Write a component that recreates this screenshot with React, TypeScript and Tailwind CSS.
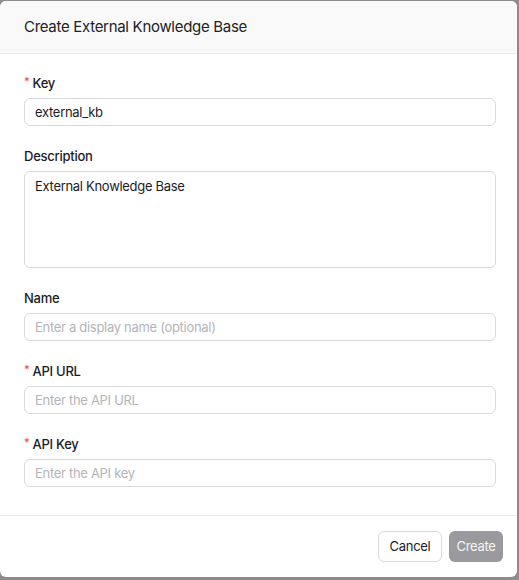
import { useState } from "react";

type FieldProps = {
  label: string;
  required?: boolean;
  className?: string;
  children: React.ReactNode;
};

function Field({ label, required, className, children }: FieldProps) {
  return (
    <div className={className}>
      <label className="flex h-[18px] items-center text-[13px] font-medium leading-[18px] tracking-[-0.25px] text-[#1c1c1e] mb-1.5">
        {required && <span className="mr-[3px] -mt-1 text-[11px] text-[#e5484d]">*</span>}
        {label}
      </label>
      {children}
    </div>
  );
}

const inputCls =
  "block w-full h-[28px] rounded-md border border-[#d9d9db] bg-white px-[10px] text-[13px] tracking-[-0.3px] text-[#1c1c1e] placeholder:text-[#b4b4b8] outline-none";

export default function App() {
  const [key, setKey] = useState("external_kb");
  const [description, setDescription] = useState("External Knowledge Base");
  const [name, setName] = useState("");
  const [apiUrl, setApiUrl] = useState("");
  const [apiKey, setApiKey] = useState("");

  return (
    <div
      className="h-[580px] w-[519px] bg-[#8c8c8c] pt-px"
      style={{ fontFamily: "Inter, 'Noto Sans', sans-serif" }}
    >
      <div className="flex h-[576px] w-[517px] flex-col overflow-hidden rounded-md bg-white">
        {/* Header */}
        <div className="flex h-[53px] shrink-0 items-center border-b border-[#ebebec] bg-[#faf9f9] px-6">
          <h2 className="text-[15px] font-normal tracking-[-0.3px] text-[#222224]">
            Create External Knowledge Base
          </h2>
        </div>

        {/* Body */}
        <div className="flex flex-1 flex-col gap-[21px] pl-6 pr-[21px] pt-5">
          <Field label="Key" required>
            <input className={inputCls} value={key} onChange={(e) => setKey(e.target.value)} />
          </Field>
          <Field label="Description">
            <textarea
              className="block h-[97px] w-full resize-none rounded-md border border-[#d9d9db] bg-white px-[10px] py-[5px] text-[13px] leading-[18px] tracking-[-0.3px] text-[#1c1c1e] outline-none"
              value={description}
              onChange={(e) => setDescription(e.target.value)}
            />
          </Field>
          <Field label="Name">
            <input
              className={inputCls}
              placeholder="Enter a display name (optional)"
              value={name}
              onChange={(e) => setName(e.target.value)}
            />
          </Field>
          <Field label="API URL" required>
            <input
              className={inputCls}
              placeholder="Enter the API URL"
              value={apiUrl}
              onChange={(e) => setApiUrl(e.target.value)}
            />
          </Field>
          <Field label="API Key" required>
            <input
              className={inputCls}
              placeholder="Enter the API key"
              value={apiKey}
              onChange={(e) => setApiKey(e.target.value)}
            />
          </Field>
        </div>

        {/* Footer */}
        <div className="flex h-[62px] shrink-0 items-center justify-end gap-[7px] border-t border-[#ebebec] pr-[14px]">
          <button className="h-[31px] w-[64px] rounded-md border border-[#d9d9db] bg-white text-[13px] tracking-[-0.3px] text-[#1c1c1e]">
            Cancel
          </button>
          <button
            disabled
            className="h-[31px] w-[54px] rounded-md bg-[#9a9a9e] text-[13px] tracking-[-0.3px] text-[#f4f4f5]"
          >
            Create
          </button>
        </div>
      </div>
    </div>
  );
}
